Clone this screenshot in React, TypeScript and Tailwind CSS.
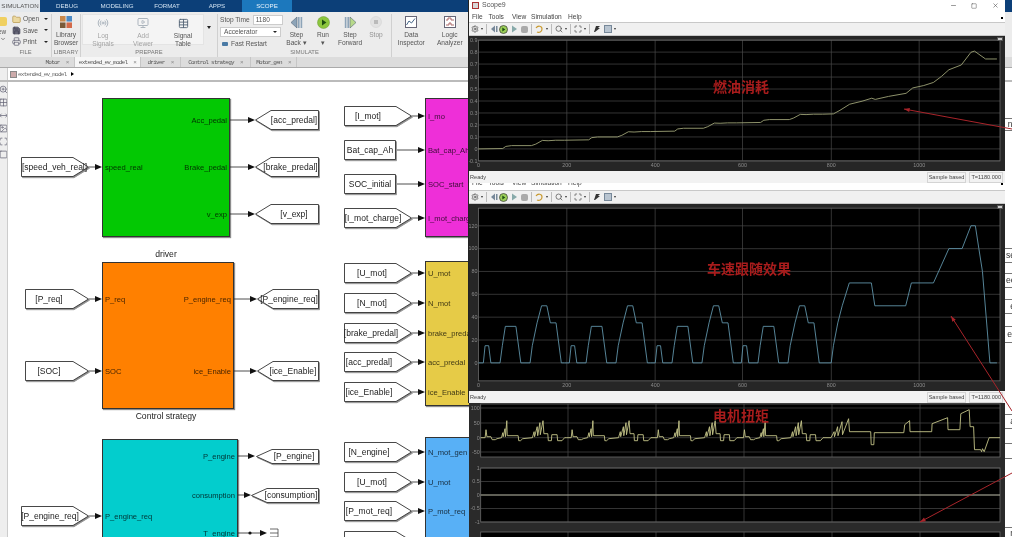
import React from "react";
import { Folder, Save, Printer, ChevronDown, ZoomIn, Image, Maximize, MoveHorizontal, Grid2x2, Square, X, Minus, Table, Radio, MonitorPlay, Settings, Search } from "lucide-react";

const CX = 8, CY = 82;
const SCALE = 0.4417;

function Block({ x, y, w, h, cls, left, right }: { x: number; y: number; w: number; h: number; cls: string; left: [string, number][]; right: [string, number][] }) {
  return (
    <div className={`absolute border border-[#333] shadow-[1px_1px_1px_rgba(0,0,0,0.45)] ${cls}`} style={{ left: x - CX, top: y - CY, width: w, height: h }}>
      {left.map(([t, py]) => (
        <span key={t} className="absolute left-[2px] -translate-y-1/2 text-[7.6px] leading-none whitespace-nowrap text-black/75" style={{ top: py - y }}>{t}</span>
      ))}
      {right.map(([t, py]) => (
        <span key={t} className="absolute right-[2px] -translate-y-1/2 text-[7.6px] leading-none whitespace-nowrap text-black/75" style={{ top: py - y }}>{t}</span>
      ))}
    </div>
  );
}

function Tag({ x, y, w, h = 20, kind, text, pad = 0 }: { x: number; y: number; w: number; h?: number; kind: "from" | "goto" | "rect"; text: string; pad?: number }) {
  const n = 16;
  const pts =
    kind === "from"
      ? `0.5,0.5 ${w - n},0.5 ${w - 0.5},${h / 2} ${w - n},${h - 0.5} 0.5,${h - 0.5}`
      : kind === "goto"
      ? `${n},0.5 ${w - 0.5},0.5 ${w - 0.5},${h - 0.5} ${n},${h - 0.5} 0.5,${h / 2}`
      : `0.5,0.5 ${w - 0.5},0.5 ${w - 0.5},${h - 0.5} 0.5,${h - 0.5}`;
  return (
    <div
      className="absolute flex items-center justify-center"
      style={{ left: x - CX, top: y - h / 2 - CY, width: w, height: h, paddingLeft: kind === "goto" ? pad : 0, paddingRight: kind === "from" ? pad : 0 }}
    >
      <svg className="absolute left-0 top-0 overflow-visible" width={w} height={h}>
        <polygon points={pts} fill="#888" stroke="#999" transform="translate(1,1.2)" />
        <polygon points={pts} fill="#fff" stroke="#333" strokeWidth="0.9" />
      </svg>
      <span className="relative text-[8.5px] leading-none whitespace-nowrap text-[#222]">{text}</span>
    </div>
  );
}

const tags: { x: number; y: number; w: number; kind: "from" | "goto" | "rect"; text: string; h?: number; pad?: number }[] = [
  { x: 255, y: 120, w: 64, kind: "goto", text: "[acc_predal]", pad: 14 },
  { x: 255, y: 167, w: 64, kind: "goto", text: "[brake_predal]", pad: 7 },
  { x: 255, y: 214, w: 64, kind: "goto", text: "[v_exp]", pad: 14 },
  { x: 257, y: 299, w: 62, kind: "goto", text: "[P_engine_req]", pad: 2 },
  { x: 257, y: 371, w: 62, kind: "goto", text: "[ice_Enable]", pad: 10 },
  { x: 256, y: 456, w: 63, kind: "goto", text: "[P_engine]", h: 15, pad: 13 },
  { x: 251, y: 495, w: 68, kind: "goto", text: "[consumption]", h: 15, pad: 12 },
  { x: 21, y: 167, w: 68, kind: "from", text: "[speed_veh_real]", pad: 1 },
  { x: 25, y: 299, w: 64, kind: "from", text: "[P_req]", pad: 16 },
  { x: 25, y: 371, w: 64, kind: "from", text: "[SOC]", pad: 16 },
  { x: 21, y: 516, w: 68, kind: "from", text: "[P_engine_req]", pad: 10 },
  { x: 344, y: 116, w: 68, kind: "from", text: "[I_mot]", pad: 20 },
  { x: 344, y: 150, w: 52, kind: "rect", text: "Bat_cap_Ah" },
  { x: 344, y: 184, w: 52, kind: "rect", text: "SOC_initial" },
  { x: 344, y: 218, w: 68, kind: "from", text: "[I_mot_charge]", pad: 10 },
  { x: 344, y: 273, w: 68, kind: "from", text: "[U_mot]", pad: 12 },
  { x: 344, y: 303, w: 68, kind: "from", text: "[N_mot]", pad: 12 },
  { x: 344, y: 333, w: 68, kind: "from", text: "[brake_predal]", pad: 14 },
  { x: 344, y: 362, w: 68, kind: "from", text: "[acc_predal]", pad: 18 },
  { x: 344, y: 392, w: 68, kind: "from", text: "[ice_Enable]", pad: 18 },
  { x: 344, y: 452, w: 68, kind: "from", text: "[N_engine]", pad: 18 },
  { x: 344, y: 482, w: 68, kind: "from", text: "[U_mot]", pad: 12 },
  { x: 344, y: 511, w: 68, kind: "from", text: "[P_mot_req]", pad: 18 },
  { x: 344, y: 541, w: 68, kind: "from", text: "" },
];

// [from x, to x (arrow tip), y]
const wires: [number, number, number][] = [
  [230, 255, 120], [230, 255, 167], [230, 255, 214], [234, 257, 299], [234, 257, 371],
  [238, 255, 456], [238, 251, 495], [238, 267, 533],
  [89, 102, 167], [89, 102, 299], [89, 102, 371], [89, 102, 516],
  [412, 425, 116], [396, 425, 150], [396, 425, 184], [412, 425, 218],
  [412, 425, 273], [412, 425, 303], [412, 425, 333], [412, 425, 362], [412, 425, 392],
  [412, 425, 452], [412, 425, 482], [412, 425, 511],
];

const stripItems: [number, number, string][] = [
  [118, 13, "nf"], [248, 15, "se"], [273, 15, "ec"], [299, 15, "e"], [326, 17, "er"], [414, 15, "a"], [443, 16, "l"], [527, 13, "n"],
];

function Diagram() {
  return (
    <div className="relative flex-1 bg-white overflow-hidden">
      <Block x={102} y={98} w={128} h={139} cls="bg-[#03c803]" left={[["speed_real", 167]]} right={[["Acc_pedal", 120], ["Brake_pedal", 167], ["v_exp", 214]]} />
      <Block x={102} y={262} w={132} h={147} cls="bg-[#ff8000]" left={[["P_req", 299], ["SOC", 371]]} right={[["P_engine_req", 299], ["ice_Enable", 371]]} />
      <Block x={102} y={439} w={136} h={130} cls="bg-[#03cdcd]" left={[["P_engine_req", 516]]} right={[["P_engine", 456], ["consumption", 495], ["T_engine", 533]]} />
      <Block x={425} y={98} w={70} h={139} cls="bg-[#ee2fd8]" left={[["I_mo", 116], ["Bat_cap_Ah", 150], ["SOC_start", 184], ["I_mot_charge", 218]]} right={[]} />
      <Block x={425} y={261} w={70} h={145} cls="bg-[#e6cb47]" left={[["U_mot", 273], ["N_mot", 303], ["brake_predal", 333], ["acc_predal", 362], ["ice_Enable", 392]]} right={[]} />
      <Block x={425} y={437} w={70} h={130} cls="bg-[#58b0f6]" left={[["N_mot_gen", 452], ["U_mot", 482], ["P_mot_req", 511]]} right={[]} />

      <span className="absolute left-[141px] top-[168px] w-[34px] text-center text-[8.6px] leading-none text-[#222]">driver</span>
      <span className="absolute left-[108px] top-[330px] w-[100px] text-center text-[8.6px] leading-none text-[#222]">Control strategy</span>

      <svg className="absolute left-0 top-0" width="1004" height="455" viewBox={`${CX} ${CY} 1004 455`}>
        {wires.map(([a, b, y]) => (
          <g key={`${a}-${b}-${y}`}>
            <line x1={a} y1={y} x2={b - 5} y2={y} stroke="#222" strokeWidth="0.8" />
            <polygon points={`${b - 7},${y - 3} ${b},${y} ${b - 7},${y + 3}`} fill="#111" />
          </g>
        ))}
        <circle cx="250" cy="533" r="1.6" fill="#111" />
        <path d="M270 529h8M270 533h8M270 537h8M278 529v8" stroke="#444" strokeWidth="0.8" fill="none" />
      </svg>

      {tags.map((t) => (
        <Tag key={`${t.x}-${t.y}`} {...t} />
      ))}

      {stripItems.map(([y, h, t]) => (
        <div key={y} className="absolute left-[980px] w-[40px] flex items-center justify-end pr-[13px] border-y border-[#777] bg-white text-[8.6px] leading-none text-[#333]" style={{ top: y - CY, height: h }}>
          {t}
        </div>
      ))}
    </div>
  );
}

function SmallBtn({ icon, label, w = 34 }: { icon: React.ReactNode; label: string[]; w?: number }) {
  return (
    <div className="flex flex-col items-center shrink-0" style={{ width: w }}>
      <div className="h-[16px] shrink-0 flex items-center">{icon}</div>
      <div className="text-[6.6px] leading-[7.6px] text-center text-[#555] mt-[1px]">
        {label.map((l) => (<div key={l} className="whitespace-nowrap">{l}</div>))}
      </div>
    </div>
  );
}

function Section({ w, title, children }: { w: number; title: string; children: React.ReactNode }) {
  return (
    <div className="flex flex-col h-full border-r border-[#d0d0d0] shrink-0 overflow-hidden" style={{ width: w }}>
      <div className="flex-1 min-h-0 flex">{children}</div>
      <div className="h-[10px] text-center text-[5.8px] leading-[10px] text-[#777]">{title}</div>
    </div>
  );
}

function Ribbon() {
  return (
    <>
      <div className="flex h-[12px] bg-[#0c3f78] text-[6.2px] leading-[12px] text-[#cfe0f0] shrink-0">
        <div className="w-[40px] bg-[#e4e8ec] text-[#555] text-center">SIMULATION</div>
        <div className="w-[50px] text-center ml-[2px]">DEBUG</div>
        <div className="w-[50px] text-center">MODELING</div>
        <div className="w-[50px] text-center">FORMAT</div>
        <div className="w-[50px] text-center">APPS</div>
        <div className="w-[50px] bg-[#1c78bd] text-center text-[#e8f3fb]">SCOPE</div>
      </div>
      <div className="flex h-[45px] bg-[#ececec] pt-[2px] shrink-0">
        <Section w={52} title="FILE">
          <div className="flex">
            <div className="w-[12px] flex flex-col items-start overflow-hidden">
              <div className="w-[7px] h-[9px] mt-[3px] bg-[#f0d060] rounded-r-[2px]" />
              <div className="text-[6.4px] leading-[8px] mt-[2px] text-[#555] -ml-[2px]">ew</div>
              <ChevronDown size={6} className="text-[#222]" />
            </div>
            <div className="flex flex-col gap-[1px] text-[6.6px] text-[#555]">
              {[
                [<Folder key="a" size={9} className="text-[#b89a50] fill-[#ecd9a0]" />, "Open"],
                [<Save key="b" size={9} className="text-[#445] fill-[#667]" />, "Save"],
                [<Printer key="c" size={9} className="text-[#667]" />, "Print"],
              ].map(([ic, t], i) => (
                <div key={i} className="flex items-center gap-[2px] h-[10.5px] w-[36px]">
                  {ic}
                  <span className="flex-1">{t}</span>
                  <span className="w-0 h-0 border-x-[2px] border-x-transparent border-t-[2.5px] border-t-[#222]" />
                </div>
              ))}
            </div>
          </div>
        </Section>
        <Section w={29} title="LIBRARY">
          <SmallBtn
            w={28}
            label={["Library", "Browser"]}
            icon={
              <svg width="12" height="12" viewBox="0 0 13 13"><rect x="0" y="0" width="6" height="6" fill="#c9884a" /><rect x="7" y="0" width="6" height="6" fill="#4b89c4" /><rect x="0" y="7" width="6" height="6" fill="#7a5b3a" /><rect x="7" y="7" width="6" height="6" fill="#d36a4a" /></svg>
            }
          />
        </Section>
        <Section w={137} title="PREPARE">
          <div className="flex items-start w-full">
            <div className="w-[122px] h-[31px] bg-[#f4f4f4] border border-[#e4e4e4] flex justify-around ml-[1px]">
              <div className="opacity-50"><SmallBtn label={["Log", "Signals"]} icon={<Radio size={12} className="text-[#678]" />} /></div>
              <div className="opacity-50"><SmallBtn label={["Add", "Viewer"]} icon={<MonitorPlay size={12} className="text-[#678]" />} /></div>
              <SmallBtn label={["Signal", "Table"]} icon={<Table size={11} className="text-[#567]" />} />
            </div>
            <span className="ml-[3px] mt-[12px] w-0 h-0 border-x-[2.5px] border-x-transparent border-t-[3px] border-t-[#222]" />
          </div>
        </Section>
        <Section w={174} title="SIMULATE">
          <div className="w-[65px] shrink-0 pl-[2px] flex flex-col text-[6.6px] text-[#555]">
            <div className="flex items-center gap-[3px] h-[11px] mt-[1px]">
              <span className="whitespace-nowrap">Stop Time</span>
              <div className="w-[30px] h-[10px] bg-white border border-[#ccc] leading-[8px] pl-[2px]">1180</div>
            </div>
            <div className="flex items-center justify-between h-[10px] mt-[2px] w-[61px] bg-white border border-[#ccc] px-[3px]">
              <span>Accelerator</span>
              <span className="w-0 h-0 border-x-[2px] border-x-transparent border-t-[2.5px] border-t-[#222]" />
            </div>
            <div className="flex items-center gap-[3px] h-[12px] mt-[2px] pl-[2px]">
              <span className="w-[6px] h-[4px] bg-[#4a7aa5] rounded-[1px]" />
              <span className="whitespace-nowrap">Fast Restart</span>
            </div>
          </div>
          <SmallBtn w={27} label={["Step", "Back ▾"]} icon={<svg width="13" height="13" viewBox="0 0 13 13"><path d="M7 1 1 6.5 7 12Z" fill="#8da4b8" stroke="#567" strokeWidth=".6" /><rect x="8" y="1" width="1.6" height="11" fill="#8da4b8" /><rect x="10.6" y="1" width="1.6" height="11" fill="#8da4b8" /></svg>} />
          <SmallBtn w={26} label={["Run", "▾"]} icon={<svg width="13" height="13" viewBox="0 0 13 13"><circle cx="6.5" cy="6.5" r="6" fill="#8cc63e" stroke="#6a9a30" strokeWidth=".5" /><path d="M5 3.6 9.4 6.5 5 9.4Z" fill="#1d4d10" /></svg>} />
          <SmallBtn w={28} label={["Step", "Forward"]} icon={<svg width="13" height="13" viewBox="0 0 13 13"><path d="M6 1 12 6.5 6 12Z" fill="#b7d98a" stroke="#567" strokeWidth=".6" /><rect x=".8" y="1" width="1.6" height="11" fill="#8da4b8" /><rect x="3.4" y="1" width="1.6" height="11" fill="#8da4b8" /></svg>} />
          <div className="opacity-60"><SmallBtn w={24} label={["Stop"]} icon={<svg width="12" height="12" viewBox="0 0 12 12"><circle cx="6" cy="6" r="5.5" fill="#ddd" stroke="#bbb" strokeWidth=".5" /><rect x="4" y="4" width="4" height="4" fill="#999" /></svg>} /></div>
        </Section>
        <Section w={78} title="">
          <div className="flex justify-around w-full">
            <SmallBtn w={36} label={["Data", "Inspector"]} icon={<svg width="12" height="12" viewBox="0 0 12 12"><rect x=".5" y=".5" width="11" height="11" fill="#fff" stroke="#667" /><path d="M1.5 9 4 5 6.5 7 10 2.5" fill="none" stroke="#468" /></svg>} />
            <SmallBtn w={36} label={["Logic", "Analyzer"]} icon={<svg width="12" height="12" viewBox="0 0 12 12"><rect x=".5" y=".5" width="11" height="11" fill="#fff" stroke="#667" /><path d="M2 4h2V2h3v2h3M2 9h3V7h2v2h3" fill="none" stroke="#a66" /></svg>} />
          </div>
        </Section>
      </div>
    </>
  );
}

function DocTabs() {
  const items: [string, number, boolean][] = [
    ["Motor", 35, false], ["extended_ev_model", 66, true], ["driver", 40, false], ["Control strategy", 70, false], ["Motor_gen", 46, false],
  ];
  return (
    <div className="flex h-[11px] bg-[#dcdcdc] pl-[40px] border-b border-[#aaa] shrink-0">
      {items.map(([t, w, a]) => (
        <div key={t} className={`flex items-center justify-center gap-[6px] border-r border-[#c6c6c6] font-['Liberation_Mono',monospace] text-[6px] tracking-[-0.75px] text-[#555] ${a ? "bg-[#f6f6f6]" : ""}`} style={{ width: w }}>
          <span className="whitespace-nowrap">{t}</span>
          <span className="text-[#888]">×</span>
        </div>
      ))}
    </div>
  );
}

function Chart({ vb, h, children }: { vb: string; h: number; children: React.ReactNode }) {
  return (
    <svg className="block w-full" height={h} viewBox={vb}>
      {children}
    </svg>
  );
}

function Axes({ x0, x1, y0, y1, xs, ys, xl }: { x0: number; x1: number; y0: number; y1: number; xs: number[]; ys: [number, string][]; xl?: string[] }) {
  return (
    <g>
      <rect x={x0} y={y0} width={x1 - x0} height={y1 - y0} fill="#000" />
      {xs.map((x) => (<line key={x} x1={x} x2={x} y1={y0} y2={y1} stroke="#4a4a4a" strokeWidth="0.7" />))}
      {ys.map(([y, t]) => (
        <g key={t}>
          <line x1={x0} x2={x1} y1={y} y2={y} stroke="#4a4a4a" strokeWidth="0.7" />
          <text x={x0 - 1} y={y + 1.8} textAnchor="end" fontSize="5.4" fill="#8a8a8a">{t}</text>
        </g>
      ))}
      <rect x={x0} y={y0} width={x1 - x0} height={y1 - y0} fill="none" stroke="#6a6a6a" strokeWidth="0.8" />
      {xl && [x0, ...xs].map((x, i) => (
        <text key={x} x={x} y={y1 + 6.5} textAnchor="middle" fontSize="5.4" fill="#8a8a8a">{xl[i]}</text>
      ))}
    </g>
  );
}

function toPath(pts: [number, number][]) {
  return pts.map(([x, y], i) => `${i ? "L" : "M"}${x.toFixed(1)} ${y.toFixed(1)}`).join("");
}

const cycleSpeed: [number, number][] = [[0, 0], [11, 0], [15, 15], [23, 15], [28, 0], [49, 0], [54, 15], [61, 32], [85, 32], [96, 0], [117, 0], [122, 15], [133, 35], [143, 50], [155, 50], [163, 35], [176, 35], [188, 0]];
const tailSpeed: [number, number][] = [[800, 0], [805, 15], [815, 35], [825, 50], [841, 70], [891, 70], [899, 50], [969, 50], [982, 70], [1032, 70], [1067, 100], [1097, 100], [1117, 120], [1127, 120], [1135, 100], [1143, 80], [1160, 0], [1176, 0]];
function speedPts(): [number, number][] {
  const out: [number, number][] = [];
  for (let c = 0; c < 4; c++) cycleSpeed.forEach(([t, v]) => out.push([477.5 + SCALE * (t + c * 195), 363 - v * 1.145]));
  tailSpeed.forEach(([t, v]) => out.push([477.5 + SCALE * t, 363 - v * 1.145]));
  return out;
}

const cycleFuel: [number, number][] = [[0, 0], [55, 0.003], [62, 0.021], [75, 0.027], [120, 0.027], [130, 0.04], [145, 0.07], [158, 0.068], [175, 0.072]];
const tailFuel: [number, number][] = [[780, 0.288], [805, 0.29], [820, 0.32], [842, 0.37], [870, 0.395], [892, 0.42], [900, 0.41], [930, 0.435], [970, 0.46], [985, 0.505], [1010, 0.525], [1032, 0.55], [1050, 0.6], [1067, 0.655], [1095, 0.695], [1117, 0.8], [1125, 0.81], [1150, 0.745], [1176, 0.745]];
function fuelPts(): [number, number][] {
  const out: [number, number][] = [];
  for (let c = 0; c < 4; c++) cycleFuel.forEach(([t, v]) => out.push([477.5 + SCALE * (t + c * 195), 149 - (v + c * 0.072) * 121]));
  tailFuel.forEach(([t, v]) => out.push([477.5 + SCALE * t, 149 - v * 121]));
  return out;
}

const cycleTorque: [number, number][] = [[0, 0], [10, 0], [12, 8], [14, 1], [23, 1], [26, -2], [33, -2], [37, -1], [47, 0], [50, 5], [51, 1], [55, 9], [56, 1], [59, 17], [60, 2], [85, 2], [86, -3], [90, -3], [95, -1], [117, 0], [121, 6], [122, 1], [128, 11], [129, 2], [134, 15], [135, 3], [141, 17], [143, 4], [152, 4], [153, -3], [160, -3], [161, 3], [173, 3], [174, -3], [184, -3], [190, 0]];
const tailTorque: [number, number][] = [[793, 0], [800, 6], [801, 1], [808, 11], [809, 2], [818, 16], [819, 3], [833, 19], [835, 6], [883, 6], [884, -7], [890, -7], [891, 5], [958, 5], [960, 13], [971, 17], [972, 6], [1021, 6], [1022, 14], [1057, 20], [1058, 8], [1085, 8], [1087, 24], [1106, 28], [1108, 11], [1116, 11], [1118, -12], [1132, -12], [1134, -14], [1136, -11], [1140, -14], [1151, 0], [1176, 0]];
function torquePts(): [number, number][] {
  const out: [number, number][] = [];
  for (let c = 0; c < 4; c++) cycleTorque.forEach(([t, h]) => out.push([480.7 + SCALE * (t + c * 195), 437.7 - h]));
  tailTorque.forEach(([t, h]) => out.push([480.7 + SCALE * t, 437.7 - h]));
  return out;
}

function ScopeToolbar() {
  const sep = <span className="w-px h-[10px] bg-[#bbb] mx-[3px]" />;
  const caret = <span className="ml-[2px] w-0 h-0 border-x-[1.5px] border-x-transparent border-t-[2px] border-t-[#333]" />;
  return (
    <div className="flex items-center h-[14px] bg-[#f0f0f0] border-y border-[#c8c8c8] pl-[2px] shrink-0">
      <Settings size={8} className="text-[#444]" />{caret}{sep}
      <svg width="8" height="8" viewBox="0 0 8 8"><path d="M5 .5 1 4 5 7.5Z" fill="#789" /><rect x="6" y="1" width="1.5" height="6" fill="#789" /></svg>
      <svg className="ml-[1px]" width="9" height="9" viewBox="0 0 9 9"><circle cx="4.5" cy="4.5" r="4" fill="#9bcf58" stroke="#333" strokeWidth=".7" /><path d="M3.3 2.6 6.3 4.5 3.3 6.4Z" fill="#1d4d10" /></svg>
      <svg className="ml-[2px]" width="8" height="8" viewBox="0 0 8 8"><path d="M2 .5 7 4 2 7.5Z" fill="#8aa" /></svg>
      <span className="ml-[3px] w-[7px] h-[7px] rounded-[2px] bg-[#aaa]" />{sep}
      <svg width="9" height="9" viewBox="0 0 9 9"><path d="M1 3C3 0 7 1 7 4S4 8 2 7" fill="none" stroke="#c99a30" strokeWidth="1.2" /></svg>{caret}{sep}
      <Search size={8} className="text-[#444]" />{caret}{sep}
      <Maximize size={8} className="text-[#444]" />{caret}{sep}
      <svg width="8" height="8" viewBox="0 0 8 8"><path d="M1 7 3 1h4L5 3h2L2 7Z" fill="#333" /></svg>
      <span className="ml-[3px] w-[8px] h-[8px] bg-[#b8c4d0] border border-[#789]" />{caret}
    </div>
  );
}

function Status() {
  return (
    <div className="flex items-center h-[12px] bg-[#f2f2f2] text-[5.6px] text-[#444] pl-[1px] pr-[2px] shrink-0">
      <span className="flex-1">Ready</span>
      <span className="border border-[#d4d4d4] px-[1px] leading-[9px]">Sample based</span>
      <span className="ml-[3px] border border-[#d4d4d4] px-[1px] leading-[9px] whitespace-nowrap">T=1180.000</span>
    </div>
  );
}

function Menu({ h }: { h: number }) {
  return (
    <div className="relative flex items-center bg-white text-[6.6px] text-[#444] pl-[3px] shrink-0" style={{ height: h }}>
      <span className="w-[16.5px]">File</span>
      <span className="w-[23.5px]">Tools</span>
      <span className="w-[19px]">View</span>
      <span className="w-[37px]">Simulation</span>
      <span>Help</span>
      <span className="absolute right-[2px] top-1/2 w-[2px] h-[2px] bg-black" />
    </div>
  );
}

function Undock() {
  return <div className="absolute right-[2px] top-[1px] w-[6px] h-[4px] bg-[#ccc] border border-[#555]" />;
}

function Title({ text, cls }: { text: string; cls: string }) {
  return <span className={`absolute font-['Noto_Sans_CJK_SC',sans-serif] text-[14px] font-bold leading-none whitespace-nowrap text-[#a81c1c] ${cls}`}>{text}</span>;
}

function Scope1() {
  return (
    <div className="absolute left-[468px] top-0 w-[537px] h-[183px] z-30 flex flex-col border-l border-[#222] bg-white">
      <div className="flex items-center h-[11px] bg-white shrink-0 text-[7px] text-[#555] pl-[3px]">
        <span className="w-[7px] h-[7px] bg-[#d8d8d8] border border-[#a33] mr-[3px]" />
        <span className="flex-1">Scope9</span>
        <Minus size={7} className="text-[#555] mr-[14px]" />
        <Square size={6} className="text-[#555] mr-[15px]" />
        <X size={7} className="text-[#555] mr-[6px]" />
      </div>
      <Menu h={11} />
      <ScopeToolbar />
      <div className="relative flex-1 bg-[#262626]">
        <Chart vb="468 36 537 135" h={135}>
          <Axes x0={477.5} x1={1000} y0={40} y1={161}
            xs={[566, 654.5, 742, 831, 919]} xl={["0", "200", "400", "600", "800", "1000"]}
            ys={[[40, "0.9"], [52, "0.8"], [64, "0.7"], [77, "0.6"], [89, "0.5"], [101, "0.4"], [113, "0.3"], [125, "0.2"], [137, "0.1"], [149, "0"], [161, "-0.1"]]} />
          <path d={toPath(fuelPts())} fill="none" stroke="#9ea276" strokeWidth="0.9" />
        </Chart>
        <Title text="燃油消耗" cls="left-[244px] top-[43px]" />
        <Undock />
      </div>
      <Status />
    </div>
  );
}

function Scope2() {
  return (
    <div className="absolute left-[468px] top-[176px] w-[537px] h-[227px] z-20 flex flex-col border-l border-[#222] bg-white">
      <Menu h={14} />
      <ScopeToolbar />
      <div className="relative flex-1 bg-[#262626]">
        <Chart vb="468 204 537 187" h={187}>
          <Axes x0={477.5} x1={1000} y0={208} y1={381}
            xs={[566, 654.5, 742, 831, 919]} xl={["0", "200", "400", "600", "800", "1000"]}
            ys={[[225.7, "120"], [248.6, "100"], [271.4, "80"], [294.3, "60"], [317.2, "40"], [340.1, "20"], [363, "0"]]} />
          <path d={toPath(speedPts())} fill="none" stroke="#5f93a8" strokeWidth="0.9" />
        </Chart>
        <Title text="车速跟随效果" cls="left-[238px] top-[57px]" />
        <Undock />
      </div>
      <Status />
    </div>
  );
}

function Scope3() {
  return (
    <div className="absolute left-[469px] top-[403px] w-[536px] h-[134px] z-10 bg-[#2a2a2a] overflow-hidden">
      <Chart vb="469 403 536 134" h={134}>
        <Axes x0={480.7} x1={1000} y0={404} y1={457} xs={[568, 656, 744, 832, 920]}
          ys={[[408, "100"], [423, "50"], [437.7, "0"], [452, "-50"]]} />
        <path d={toPath(torquePts())} fill="none" stroke="#c4c488" strokeWidth="0.9" />
        <Axes x0={480.7} x1={1000} y0={468} y1={522} xs={[568, 656, 744, 832, 920]}
          ys={[[468, "1"], [481.5, "0.5"], [495, "0"], [508.5, "-0.5"], [522, "-1"]]} />
        <line x1={480.7} x2={1000} y1={495} y2={495} stroke="#b5b5a0" strokeWidth="0.9" />
        <Axes x0={480.7} x1={1000} y0={532} y1={560} xs={[568, 656, 744, 832, 920]} ys={[]} />
      </Chart>
      <Title text="电机扭矩" cls="left-[244px] top-[5px]" />
    </div>
  );
}

function Arrows() {
  const lines: [number, number, number, number][] = [
    [1012, 129, 904, 109],
    [1012, 411, 951, 316],
    [1012, 473, 920, 522],
  ];
  return (
    <svg className="absolute left-0 top-0 z-40 pointer-events-none" width="1012" height="537" viewBox="0 0 1012 537">
      {lines.map(([a, b, c, d]) => {
        const ang = Math.atan2(b - d, a - c);
        const l = 6;
        const p1 = [c + l * Math.cos(ang + 0.35), d + l * Math.sin(ang + 0.35)];
        const p2 = [c + l * Math.cos(ang - 0.35), d + l * Math.sin(ang - 0.35)];
        return (
          <g key={c}>
            <line x1={a} y1={b} x2={c} y2={d} stroke="#a8242a" strokeWidth="1" />
            <polygon points={`${c},${d} ${p1[0]},${p1[1]} ${p2[0]},${p2[1]}`} fill="#a8242a" />
          </g>
        );
      })}
    </svg>
  );
}

export default function App() {
  return (
    <div className="relative w-[1012px] h-[537px] overflow-hidden bg-white font-['Liberation_Sans',Arial,sans-serif] blur-[0.35px]">
      <div className="flex flex-col h-full">
        <Ribbon />
        <DocTabs />
        <div className="flex items-center h-[14px] bg-white border-b-2 border-[#bbb] shrink-0">
          <div className="w-[8px] h-full bg-[#eee] border-r border-[#ccc]" />
          <span className="ml-[2px] w-[7px] h-[7px] bg-[#caa] border border-[#888]" />
          <span className="ml-[1px] font-['Liberation_Mono',monospace] text-[6px] tracking-[-0.75px] text-[#666]">extended_ev_model</span>
          <span className="ml-[5px] w-0 h-0 border-y-[2.5px] border-y-transparent border-l-[3px] border-l-black" />
        </div>
        <div className="flex flex-1 min-h-0">
          <div className="w-[8px] bg-[#eee] border-r border-[#ccc] shrink-0 flex flex-col items-end gap-[4px] pt-[3px] overflow-hidden text-[#667]">
            <ZoomIn size={9} className="shrink-0 -mr-[1px]" />
            <Grid2x2 size={9} className="shrink-0 -mr-[1px]" />
            <MoveHorizontal size={9} className="shrink-0 -mr-[1px]" />
            <Image size={9} className="shrink-0 -mr-[1px]" />
            <Maximize size={9} className="shrink-0 -mr-[1px]" />
            <Square size={9} className="shrink-0 -mr-[1px]" />
          </div>
          <Diagram />
        </div>
      </div>
      <Scope3 />
      <Scope2 />
      <Scope1 />
      <Arrows />
    </div>
  );
}
